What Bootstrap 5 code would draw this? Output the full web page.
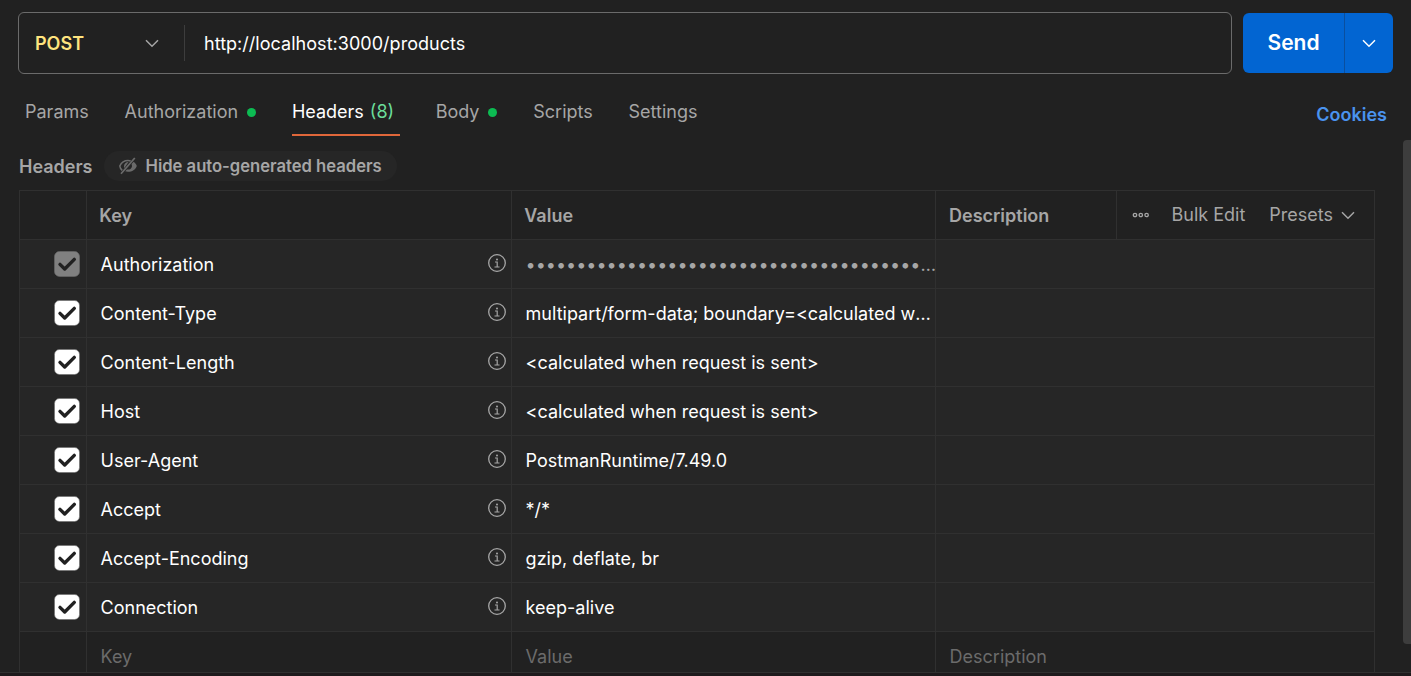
<!DOCTYPE html>
<html lang="en">
<head>
<meta charset="utf-8">
<meta name="viewport" content="width=device-width, initial-scale=1">
<title>Request headers</title>
<link href="https://cdn.jsdelivr.net/npm/bootstrap@5.3.0/dist/css/bootstrap.min.css" rel="stylesheet">
<style>
  body { background:#212121; color:#fff; font-family:Inter,"Liberation Sans",sans-serif; font-size:18px; line-height:24px; height:676px; overflow:hidden; }
  svg { display:block; flex:none; }
  .ink-2 { color:#a6a6a6; }
  .ink-3 { color:#6b6b6b; }
  .app { height:676px; }
  .request-bar { padding:12px 18px 0; gap:11px; height:74px; }
  .url-box { border:1px solid #6b6b6b; border-radius:6px; height:62px; }
  .verb { width:166px; height:36px; padding:0 25px 0 16px; border-right:1px solid #3d3d3d; color:#ffe47e; font-weight:600; }
  .verb span { padding-top:2px; }
  .url-text { padding:2px 0 0 19px; letter-spacing:.03px; }
  .send { height:60px; margin-top:1px; width:150px; border-radius:6px; background:#0265d2; }
  .send-main { width:102px; border-right:1px solid #0a4f9f; font-size:21px; font-weight:600; }
  .tabs { height:62px; padding:0 24px 0 25px; }
  .tab { height:36px; margin-top:26px; color:#a6a6a6; white-space:nowrap; }
  .tab + .tab { margin-left:35.800px; }
  .tab.current { color:#fff; width:108px; border-bottom:2px solid #e0673a; }
  .dot { width:9px; height:9px; border-radius:50%; background:#0cbb52; margin-left:9px; }
  .count { color:#6bdd9a; margin-left:6px; }
  .cookies { color:#4a93ee; font-weight:600; margin-top:32px; }
  .subhead { height:54px; padding:15px 0 9px 19px; gap:12px; }
  .subhead > span { padding-top:2px; }
  .pill { background:#262626; height:30px; border-radius:15px; padding:0 15px; width:293px; margin-left:-1px; white-space:nowrap; font-size:16.620px; }
  .sheet { margin-left:19px; width:1356px; height:482px; overflow:hidden; border-right:1px solid #303030; }
  .line { display:grid; grid-template-columns:67px 425px 424px 1fr; height:49px; background:#262626; }
  .line.plain { background:#212121; }
  .line.top { grid-template-columns:67px 425px 424px 181px 1fr; }
  .line > div { border-left:1px solid #303030; border-top:1px solid #303030; display:flex; align-items:center; min-width:0; padding:2px 0 0 13.600px; }
  .line > .tick { padding:0 0 0 34px; }
  .line.top > div { padding-left:12.300px; }
  .line.top > .tools { padding:0 0 0 12px; }
  .key { justify-content:space-between; }
  .key svg { margin:-4px 5px 0 0; }
  .secret { color:#a6a6a6; margin-right:-4px; }
  .foot { height:4px; border-top:1px solid #303030; background:#1e1a1c; }
  .thumb { position:absolute; right:0; top:140px; width:8px; height:504px; border-radius:4px 0 0 4px; background:#3d3d3d; }
</style>
</head>
<body>
<svg width="0" height="0" class="position-absolute" aria-hidden="true">
  <symbol id="chev" viewBox="0 0 14 9"><path d="M1 1.2 7 7.2 13 1.2" fill="none" stroke="currentColor" stroke-width="1.5"/></symbol>
  <symbol id="check" viewBox="0 0 26 26"><rect x=".5" y=".5" width="25" height="25" rx="5" fill="currentColor" stroke="#6b6b6b" stroke-opacity=".6"/><path d="M6 13.4 10.7 18 20.3 8.4" fill="none" stroke="#212121" stroke-width="3.4" stroke-linecap="round" stroke-linejoin="round"/></symbol>
  <symbol id="info" viewBox="0 0 18 18"><circle cx="9" cy="9" r="8.3" fill="none" stroke="currentColor" stroke-width="1.3"/><circle cx="9" cy="5.4" r="1" fill="currentColor"/><path d="M7 8h2.2v5M6.5 13h5" fill="none" stroke="currentColor" stroke-width="1.2"/></symbol>
</svg>
<div class="app d-flex flex-column position-relative">
  <div class="request-bar d-flex">
    <div class="url-box d-flex align-items-center flex-grow-1">
      <div class="verb d-flex align-items-center justify-content-between"><span>POST</span><svg width="14" height="9" class="ink-2"><use href="#chev"/></svg></div>
      <div class="url-text">http://localhost:3000/products</div>
    </div>
    <div class="send d-flex">
      <div class="send-main d-flex align-items-center justify-content-center">Send</div>
      <div class="d-flex align-items-center justify-content-center flex-grow-1"><svg width="14" height="9"><use href="#chev"/></svg></div>
    </div>
  </div>
  <nav class="tabs d-flex align-items-start">
    <div class="tab d-flex align-items-start"><span>Params</span></div>
    <div class="tab d-flex align-items-start"><span>Authorization</span><i class="dot mt-2"></i></div>
    <div class="tab current d-flex align-items-start"><span>Headers</span><span class="count">(8)</span></div>
    <div class="tab d-flex align-items-start"><span>Body</span><i class="dot mt-2"></i></div>
    <div class="tab d-flex align-items-start"><span>Scripts</span></div>
    <div class="tab d-flex align-items-start"><span>Settings</span></div>
    <div class="cookies ms-auto lh-1">Cookies</div>
  </nav>
  <div class="subhead d-flex align-items-center ink-2 fw-semibold">
    <span>Headers</span>
    <div class="pill d-flex align-items-center">
      <svg width="18" height="18" viewBox="0 0 18 18" style="margin-right:9px"><path d="M3.200 13.400C2 12.300 1 10.700 .8 9 2.500 5.300 5.500 3.500 9 3.500c1 0 1.900.2 2.700.5" fill="none" stroke="#6b6b6b" stroke-width="1.600"/><path d="M9.500 5C7 5 5 6.800 5 9.300c0 .7.100 1.200.4 1.700ZM14.700 4.700C16.200 5.800 17.300 7.300 17.800 9 16.500 12.800 13.200 14.800 9 14.800c-1 0-2-.2-2.800-.5L8 12.500c2.500.5 4.800-1 5-3.300 0-.8-.2-1.500-.5-2.200Z" fill="#6b6b6b"/><path d="M2 16.800 15.800 1" stroke="#6b6b6b" stroke-width="1.700"/></svg>
      <span>Hide auto-generated headers</span>
    </div>
  </div>
  <div class="sheet">
    <div class="line plain top ink-2">
      <div></div><div class="fw-semibold">Key</div><div class="fw-semibold">Value</div><div class="fw-semibold" style="padding-left:13px">Description</div>
      <div class="tools"><svg width="17" height="6" viewBox="0 0 17 6" style="margin-left:3px"><g fill="none" stroke="currentColor" stroke-width="1.300"><circle cx="3" cy="3" r="1.700"/><circle cx="8.800" cy="3" r="1.700"/><circle cx="14.600" cy="3" r="1.700"/></g></svg><span style="margin-left:22.500px">Bulk Edit</span><span style="margin-left:24px">Presets</span><svg width="14" height="9" style="margin-left:8px"><use href="#chev"/></svg></div>
    </div>
    <div class="line"><div class="tick" style="color:#808080"><svg width="26" height="26"><use href="#check"/></svg></div><div class="key">Authorization<svg width="18" height="18" class="ink-2"><use href="#info"/></svg></div><div><span class="text-truncate secret">••••••••••••••••••••••••••••••••••••••••••••••••••••••••••••</span></div><div></div></div>
    <div class="line"><div class="tick"><svg width="26" height="26"><use href="#check"/></svg></div><div class="key">Content-Type<svg width="18" height="18" class="ink-2"><use href="#info"/></svg></div><div><span class="text-truncate">multipart/form-data; boundary=&lt;calculated when request is sent&gt;</span></div><div></div></div>
    <div class="line"><div class="tick"><svg width="26" height="26"><use href="#check"/></svg></div><div class="key">Content-Length<svg width="18" height="18" class="ink-2"><use href="#info"/></svg></div><div>&lt;calculated when request is sent&gt;</div><div></div></div>
    <div class="line"><div class="tick"><svg width="26" height="26"><use href="#check"/></svg></div><div class="key">Host<svg width="18" height="18" class="ink-2"><use href="#info"/></svg></div><div>&lt;calculated when request is sent&gt;</div><div></div></div>
    <div class="line"><div class="tick"><svg width="26" height="26"><use href="#check"/></svg></div><div class="key">User-Agent<svg width="18" height="18" class="ink-2"><use href="#info"/></svg></div><div>PostmanRuntime/7.49.0</div><div></div></div>
    <div class="line"><div class="tick"><svg width="26" height="26"><use href="#check"/></svg></div><div class="key">Accept<svg width="18" height="18" class="ink-2"><use href="#info"/></svg></div><div>*/*</div><div></div></div>
    <div class="line"><div class="tick"><svg width="26" height="26"><use href="#check"/></svg></div><div class="key">Accept-Encoding<svg width="18" height="18" class="ink-2"><use href="#info"/></svg></div><div>gzip, deflate, br</div><div></div></div>
    <div class="line"><div class="tick"><svg width="26" height="26"><use href="#check"/></svg></div><div class="key">Connection<svg width="18" height="18" class="ink-2"><use href="#info"/></svg></div><div>keep-alive</div><div></div></div>
    <div class="line plain ink-3"><div></div><div>Key</div><div>Value</div><div>Description</div></div>
  </div>
  <div class="foot"></div>
  <div class="thumb"></div>
</div>
<script src="https://cdn.jsdelivr.net/npm/bootstrap@5.3.0/dist/js/bootstrap.bundle.min.js"></script>
</body>
</html>
